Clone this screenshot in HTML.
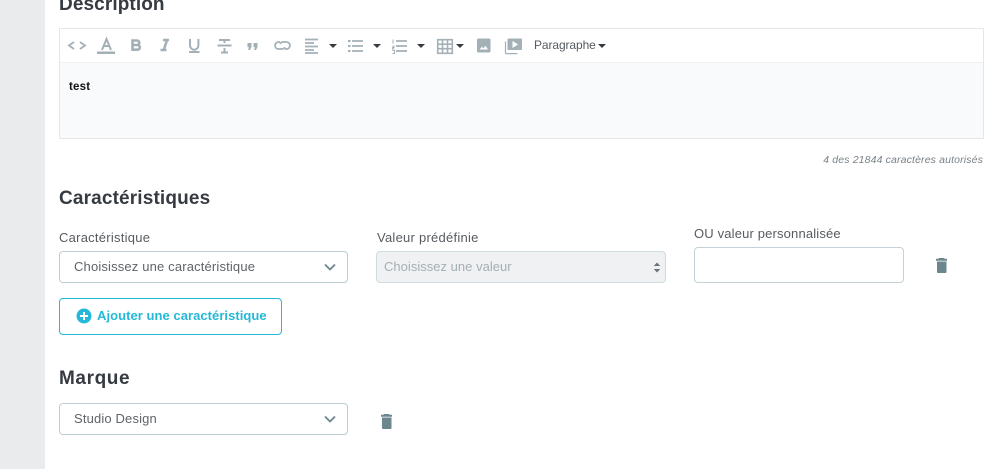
<!DOCTYPE html>
<html><head><meta charset="utf-8"><style>
html,body{margin:0;padding:0}
body{width:1000px;height:469px;position:relative;overflow:hidden;background:#fff;font-family:"Liberation Sans",sans-serif;color:#363a41}
.a{position:absolute;white-space:nowrap}
.h{font-weight:bold;font-size:19px;line-height:24px;color:#363a41}
.l{font-size:13px;line-height:18px;color:#575b61;letter-spacing:.25px}
.box{position:absolute;box-sizing:border-box;background:#fff;border:1px solid #bbcdd2;border-radius:4px}
.t{font-size:13px;line-height:18px;color:#5f6469;letter-spacing:.16px}
svg{position:absolute;overflow:visible}
.ic{fill:none;stroke:#a3b1b7;stroke-width:1.800}
.f{fill:#a3b1b7;stroke:none}
.car{position:absolute;width:0;height:0;border-left:4px solid transparent;border-right:4px solid transparent;border-top:4px solid #363a41}
</style></head><body>
<div class="a" style="left:0;top:0;width:45px;height:469px;background:#eaebec"></div>
<div class="a h" style="left:59px;top:-7px;letter-spacing:.1px">Description</div>

<div class="a" style="left:59px;top:28px;width:925px;height:111px;box-sizing:border-box;border:1px solid #e4e6e8;background:#f9fafb"></div>
<div class="a" style="left:60px;top:29px;width:923px;height:33px;background:#fff;border-bottom:1px solid #eef0f1"></div>

<svg style="left:0;top:0" width="1000" height="469">
<path class="ic" d="M74 42l-5 3.500 5 3.500M80 42l5 3.500-5 3.500"/>
<path class="ic" style="stroke-width:2" d="M102 50l4.500-11 4.500 11M103.500 46h6"/>
<rect class="f" x="97" y="51.500" width="18" height="2.500"/>
<path class="ic" style="stroke-width:2.600" d="M132.500 40.500h4.500a2.200 2.200 0 0 1 0 4.500h-4.500zM132.500 45h5a2.300 2.300 0 0 1 0 4.700h-5z"/>
<path class="ic" style="stroke-width:2.600" d="M163 40h6M167 40l-3 9.500M160.500 50h6"/>
<path class="ic" style="stroke-width:2" d="M190 39v6.500a4.200 4.200 0 0 0 8.400 0V39M189 52h10.500"/>
<path class="ic" style="stroke-width:2" d="M217.500 45.500h14M219 40h11M224.500 40v3M224.500 48v4.500M221 52.500h7"/>
<path class="f" d="M247.500 43h4v4l-1.500 3h-2l1-2.800h-1.500zM253.500 43h4v4l-1.500 3h-2l1-2.800h-1.500z"/>
<path class="ic" style="stroke-width:1.700" d="M280 42h-1.500a3.500 3.500 0 0 0 0 7h3.500a3.500 3.500 0 0 0 3-1.800M285 49h1.500a3.500 3.500 0 0 0 0-7H283a3.500 3.500 0 0 0-3 1.800"/>
<path class="ic" style="stroke-width:1.700" d="M305 39.500h13M305 43h9M305 46.500h13M305 50h9M305 53h13"/>
<path class="ic" style="stroke-width:1.700" d="M352 41h11M352 46h11M352 51h11"/>
<path class="f" d="M348 40h2.500v2H348zM348 45h2.500v2H348zM348 50h2.500v2H348z"/>
<path class="ic" style="stroke-width:1.700" d="M396 41h11M396 46h11M396 51h11"/>
<path class="ic" style="stroke-width:1" d="M393 39.500v4M392.500 46h1.500v1.500h-1.500v1.500h2M392.500 50.500h2v3h-2"/>
<path class="ic" style="stroke-width:1.600" d="M437.700 39.700h14.600v13.600h-14.600zM442.500 39.700v13.600M447.500 39.700v13.600M437.700 44.200h14.600M437.700 48.700h14.600"/>
<path class="f" d="M478.500 38.500h10.500a1.500 1.500 0 0 1 1.500 1.500v11a1.500 1.500 0 0 1-1.500 1.500h-10.500a1.500 1.500 0 0 1-1.500-1.500v-11a1.500 1.500 0 0 1 1.500-1.500z"/>
<path d="M479.500 49.500l2.500-2.800 1.500 1.500 2-2.500 2.500 3.800z" fill="#fff"/>
<path class="f" d="M508.500 38.500h12.500a1 1 0 0 1 1 1v9.500a1 1 0 0 1-1 1h-12.500a1 1 0 0 1-1-1v-9.500a1 1 0 0 1 1-1z"/>
<path d="M512.500 41l5.500 3.500-5.500 3.500z" fill="#fff"/>
<path class="ic" style="stroke-width:1.200" d="M505.500 41.500v11.500a.6.600 0 0 0 .6.600h11.400"/>
</svg>
<div class="car" style="left:329px;top:44px"></div>
<div class="car" style="left:373px;top:44px"></div>
<div class="car" style="left:417px;top:44px"></div>
<div class="car" style="left:456px;top:44px"></div>
<div class="car" style="left:598px;top:44px"></div>
<div class="a" style="left:534px;top:37px;font-size:12px;line-height:17px;color:#555a60;letter-spacing:-.1px">Paragraphe</div>
<div class="a" style="left:69px;top:80px;font-size:11.500px;line-height:14px;font-weight:bold;color:#111;letter-spacing:.2px">test</div>
<div class="a" style="right:17px;top:153px;font-size:10.500px;line-height:14px;font-style:italic;color:#7a8288;letter-spacing:.14px">4 des 21844 caractères autorisés</div>

<div class="a h" style="left:59px;top:187px;letter-spacing:.15px">Caractéristiques</div>
<div class="a l" style="left:59px;top:229px">Caractéristique</div>
<div class="box" style="left:59px;top:251px;width:289px;height:32px"></div>
<div class="a t" style="left:74px;top:258px">Choisissez une caractéristique</div>
<svg style="left:0;top:0" width="1000" height="469"><path d="M325 264.500l5 5 5-5" fill="none" stroke="#6c868e" stroke-width="1.800"/></svg>

<div class="a l" style="left:377px;top:229px">Valeur prédéfinie</div>
<div class="box" style="left:376px;top:251px;width:290px;height:32px;background:#eff1f2;border-color:#cfdcdf"></div>
<div class="a t" style="left:384px;top:258px;color:#a5b0b4;letter-spacing:.02px">Choisissez une valeur</div>
<svg style="left:0;top:0" width="1000" height="469"><path d="M657 262.500l3.300 3.500h-6.600zM657 272.500l3.300-3.500h-6.600z" fill="#6c7378"/></svg>

<div class="a l" style="left:694px;top:225px;letter-spacing:.16px">OU valeur personnalisée</div>
<div class="box" style="left:694px;top:247px;width:210px;height:36px;border-color:#c3d2d6"></div>
<svg style="left:0;top:0" width="1000" height="469"><path d="M936 258.800h2.500l.6-.8h4.800l.6.800h2.500v1.900H936zM937 261.500h9.500v10.200a1.300 1.300 0 0 1-1.300 1.300h-6.900a1.300 1.300 0 0 1-1.300-1.300z" fill="#6c868e"/></svg>

<div class="a" style="left:59px;top:298px;width:223px;height:37px;box-sizing:border-box;border:1px solid #25b9d7;border-radius:4px"></div>
<svg style="left:0;top:0" width="1000" height="469"><circle cx="84" cy="316" r="7.500" fill="#25b9d7"/><path d="M80 316h8M84 312v8" stroke="#fff" stroke-width="2"/></svg>
<div class="a" style="left:97px;top:307px;font-size:13px;line-height:18px;font-weight:bold;color:#25b9d7;letter-spacing:.05px">Ajouter une caractéristique</div>

<div class="a h" style="left:59px;top:367px;letter-spacing:.6px">Marque</div>
<div class="box" style="left:59px;top:403px;width:289px;height:32px"></div>
<div class="a t" style="left:74px;top:410px;letter-spacing:.15px">Studio Design</div>
<svg style="left:0;top:0" width="1000" height="469"><path d="M381 414.800h2.500l.6-.8h4.800l.6.800h2.500v1.900H381zM382 417.500h9.500v10.200a1.300 1.300 0 0 1-1.300 1.300h-6.900a1.300 1.300 0 0 1-1.300-1.300z" fill="#6c868e"/><path d="M325 416.500l5 5 5-5" fill="none" stroke="#6c868e" stroke-width="1.800"/></svg>
</body></html>
